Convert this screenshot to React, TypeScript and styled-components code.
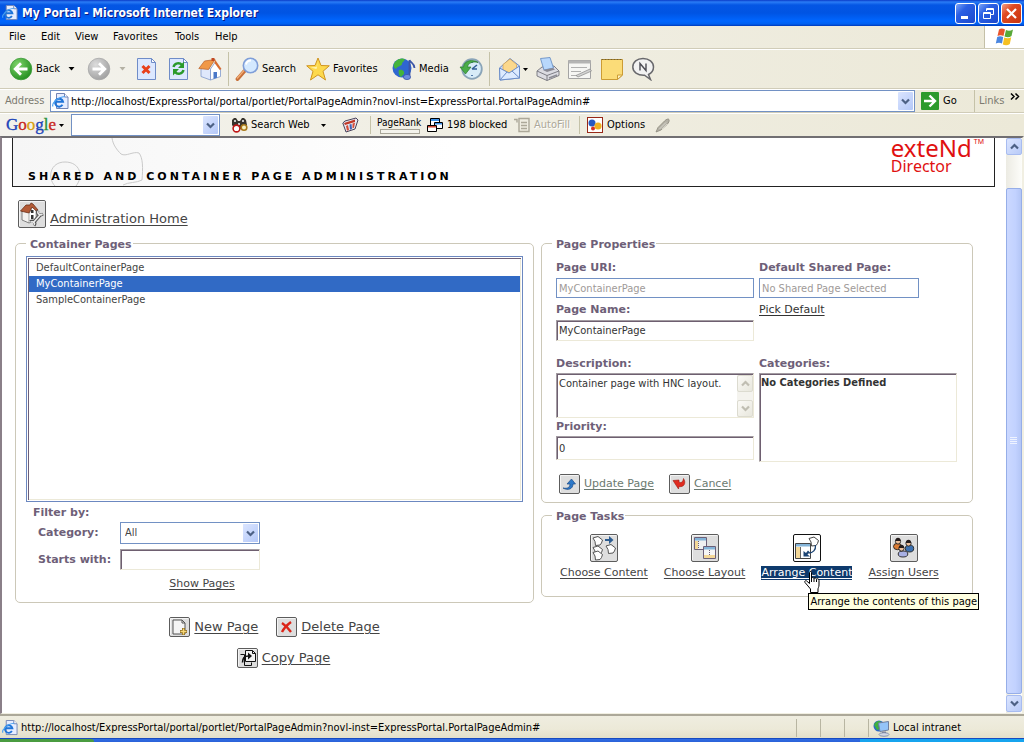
import React from "react";
import styled, { createGlobalStyle, css } from "styled-components";

const ui = `"DejaVu Sans Condensed", "Noto Sans", sans-serif`;
const page = `"DejaVu Sans", "Noto Sans", sans-serif`;

const Global = createGlobalStyle`
  * { box-sizing: border-box; }
  body { margin: 0; background: #fff; font: 11px/14px ${ui}; color: #000; }
  svg { display: block; flex: none; }
  button, input, select, textarea { font: inherit; color: inherit; margin: 0; border-radius: 0; }
`;

/* ---------- browser window ---------- */

const Window = styled.div`
  display: flex;
  flex-direction: column;
  min-height: 100vh;
  overflow: hidden;
`;

const bare = css`
  border: 0;
  padding: 0;
  background: none;
  display: flex;
  align-items: center;
  flex: none;
  white-space: nowrap;
`;

const TitleBar = styled.header`
  display: flex;
  align-items: center;
  gap: 4px;
  height: 26px;
  padding: 0 2px;
  background: linear-gradient(#0a3bc8 0, #2a7cf6 2px, #0456e4 5px, #0054e3 13px, #0066ff 21px, #0060f0 24px, #0038b8 26px);
`;

const Title = styled.h1`
  flex: 1;
  margin: 0;
  font: bold 12px/16px "DejaVu Sans Condensed", sans-serif;
  color: #fff;
  text-shadow: 1px 1px 0 #0a1883;
`;

const Caption = styled.button<{ $close?: boolean }>`
  ${bare}
  justify-content: center;
  width: 21px;
  height: 21px;
  margin-left: -2px;
  border: 1px solid #fff;
  border-radius: 3px;
  background: ${(p) =>
    p.$close
      ? "linear-gradient(135deg, #f0a088, #e04a22 35%, #c83410)"
      : "linear-gradient(135deg, #7ba4f8, #2a5fe4 35%, #1c48cc)"};
`;

const MenuBar = styled.nav`
  display: flex;
  height: 23px;
  align-items: stretch;
  background: linear-gradient(90deg, #f4f3ee, #ece9d8);
  border-bottom: 1px solid #d0ccb8;
`;

const Menu = styled.button<{ $w: number }>`
  ${bare}
  width: ${(p) => p.$w}px;
  height: 21px;
`;

const Menus = styled.div`
  display: flex;
  flex: 1;
  padding-left: 9px;
`;

const Flag = styled.div`
  display: flex;
  align-items: center;
  justify-content: center;
  width: 40px;
  background: #fff;
  border-left: 1px solid #c4c0a8;
`;

const bar = css`
  display: flex;
  align-items: center;
  background: linear-gradient(90deg, #f3f2ec, #ece9d8);
  border-top: 1px solid #fff;
`;

const ToolBar = styled.div`
  ${bar}
  height: 40px;
  padding-left: 9px;
  border-bottom: 1px solid #d0ccb8;
`;

const Tool = styled.button<{ $w: number }>`
  ${bare}
  gap: 3px;
  width: ${(p) => p.$w}px;
  height: 32px;
`;

const Separator = styled.span<{ $w: number; $h?: number }>`
  flex: none;
  width: ${(p) => p.$w}px;
  height: ${(p) => p.$h ?? 34}px;
  border-left: 1px solid #c5c2a8;
`;

const AddressBar = styled.form`
  ${bar}
  height: 24px;
  padding-left: 5px;
  border-bottom: 1px solid #d0ccb8;
`;

const AddressLabel = styled.label`
  width: 45px;
  color: #7c7a70;
`;

const Combo = styled.div<{ $w?: number }>`
  display: flex;
  align-items: center;
  flex: ${(p) => (p.$w ? `0 0 ${p.$w}px` : "1")};
  min-width: 0;
  height: 22px;
  padding: 1px;
  gap: 2px;
  border: 1px solid #7291c4;
  background: #fff;
`;

const ComboInput = styled.input`
  flex: 1;
  min-width: 0;
  height: 18px;
  border: 0;
  padding: 0;
  outline: 0;
  background: none;
`;

const DropButton = styled.button`
  ${bare}
  justify-content: center;
  width: 15px;
  height: 18px;
  background: linear-gradient(135deg, #dbe5ff, #b4c8f8);
  border-radius: 1px;
`;

const GoButton = styled.button`
  ${bare}
  gap: 4px;
  width: 53px;
  margin-left: 6px;
`;

const Links = styled.div`
  display: flex;
  justify-content: space-between;
  width: 50px;
  height: 22px;
  padding: 4px 4px 0 4px;
  border-left: 1px solid #c5c2a8;
  color: #7c7a70;
`;

const Chevron = styled.svg`
  margin-top: -1px;
`;

const GoogleBar = styled.div`
  ${bar}
  height: 23px;
  padding-left: 6px;
`;

const GoogleLogo = styled.button`
  ${bare}
  width: 65px;
  gap: 3px;
  font: 17px/20px "Liberation Serif", serif;
`;

const Letter = styled.span<{ $c: string }>`
  color: ${(p) => p.$c};
  -webkit-text-stroke: thin ${(p) => p.$c};
`;

const Rank = styled.div`
  width: 50px;
  font-size: 10px;
  line-height: 11px;
  flex: none;
`;

const RankMeter = styled.div`
  width: 40px;
  height: 5px;
  margin: 1px 0 0 3px;
  border: 1px solid #a8a598;
  background: #f4f3ec;
`;

const Muted = styled.span`
  color: #aca899;
  text-shadow: 1px 1px 0 #fff;
`;

const Viewport = styled.div`
  display: flex;
  flex: 1;
  border-top: 2px solid #716f72;
  border-left: 2px solid #8a7f88;
  border-bottom: 1px solid #f1efe2;
  border-right: 2px solid #f1efe2;
`;

const ScrollTrack = styled.div`
  display: flex;
  flex-direction: column;
  width: 16px;
  padding-bottom: 1px;
  background: linear-gradient(90deg, #ecebe3, #fdfdfa);
`;

const ScrollButton = styled.button<{ $off?: boolean }>`
  ${bare}
  justify-content: center;
  width: 16px;
  height: 17px;
  border: 1px solid ${(p) => (p.$off ? "#dcdbd0" : "#a8bcf0")};
  border-radius: 2px;
  background: ${(p) => (p.$off ? "linear-gradient(135deg,#fbfaf6,#e8e7dd)" : "linear-gradient(135deg,#dbe5ff,#b9cbf8)")};
`;

const Thumb = styled.div`
  flex: 1;
  display: flex;
  align-items: center;
  justify-content: center;
  margin: 33px 0 1px;
  border: 1px solid #96aee8;
  border-radius: 2px;
  background: linear-gradient(90deg, #cbd8ff, #c2d2ff 60%, #b4c6f6);
`;

const StatusBar = styled.footer`
  display: flex;
  align-items: center;
  height: 24px;
  padding: 2px 0 0 2px;
  gap: 3px;
  border-top: 2px solid #aca899;
  background: linear-gradient(#efede0, #ece9d8 60%, #e2dfca);
`;

const StatusText = styled.span`
  flex: 1;
`;

const Panes = styled.div`
  display: flex;
`;

const Pane = styled.span<{ $w: number }>`
  display: flex;
  align-items: center;
  gap: 3px;
  width: ${(p) => p.$w}px;
  height: 18px;
  padding-left: 4px;
  border-left: 1px solid #b8b5a2;
`;

const TaskBar = styled.div`
  display: flex;
  height: 4px;
  background: linear-gradient(#2f6be4, #2a62d8);
  border-top: 1px solid #164ac0;
`;

const StartEdge = styled.div`
  width: 94px;
  background: #4a9c40;
  border-radius: 0 4px 0 0;
`;

const TrayEdge = styled.div`
  width: 164px;
  margin-left: auto;
  background: #16a4ee;
`;

/* ---------- portal page ---------- */

const Main = styled.main`
  flex: 1;
  min-width: 0;
  color: #444;
  font-family: ${page};
`;

const Banner = styled.div`
  position: relative;
  display: flex;
  justify-content: space-between;
  height: 49px;
  margin: 0 11px 0 10px;
  padding: 0 10px 0 15px;
  border: 1px solid #222;
  border-top: 0;
  background: linear-gradient(90deg, #f6f6f6, #fff 45%);
`;

const Puzzle = styled.svg`
  position: absolute;
  left: 0;
  top: 0;
`;

const BannerTitle = styled.h2`
  position: relative;
  align-self: flex-end;
  margin: 0 0 2px;
  color: #000;
  font: bold 11px/14px ${page};
  letter-spacing: 3px;
`;

const Brand = styled.div`
  display: grid;
  grid-template-columns: auto auto;
  column-gap: 2px;
  align-content: start;
  color: #e01010;
  font-family: "Noto Sans", sans-serif;
`;

const BrandName = styled.span`
  font-size: 24px;
  line-height: 20px;
`;

const BrandMark = styled.span`
  font-size: 7px;
  line-height: 8px;
`;

const BrandSub = styled.span`
  font-size: 16px;
  line-height: 16px;
`;

const Link = styled.a<{ $size?: number; $tone?: string }>`
  display: inline-flex;
  align-items: center;
  gap: 4px;
  color: ${(p) => p.$tone ?? "#444"};
  font-size: ${(p) => p.$size ?? 11}px;
  line-height: 14px;
  white-space: nowrap;
  text-decoration: underline;
  text-underline-offset: 2px;
  text-decoration-thickness: 1px;
`;

const HomeRow = styled.div`
  display: flex;
  padding: 13px 0 7px 16px;
`;

const HomeText = styled.span`
  padding-top: 9px;
`;

const Columns = styled.div`
  display: grid;
  grid-template-columns: minmax(0, 519fr) minmax(0, 432fr);
  gap: 7px;
  padding: 0 33px 0 13px;
`;

const Stack = styled.div`
  display: flex;
  flex-direction: column;
  gap: 4px;
`;

const Group = styled.fieldset<{ $pad: string }>`
  min-width: 0;
  margin: 0;
  padding: ${(p) => p.$pad};
  border: 1px solid #ccc8b8;
  border-radius: 5px;
`;

const bold = css`
  color: #6e5f78;
  font-weight: bold;
  font-size: 11px;
`;

const Legend = styled.legend<{ $shift?: number }>`
  ${bold}
  margin-left: ${(p) => p.$shift ?? 0}px;
  padding: 4px 1px 0 4px;
  line-height: 12px;
`;

const Label = styled.label`
  ${bold}
  display: block;
  line-height: 14px;
`;

const PageList = styled.select`
  display: block;
  width: 100%;
  height: 246px;
  padding: 3px 2px 2px 2px;
  overflow: hidden;
  outline: 0;
  border: 1px solid #6c88c0;
  box-shadow: inset 0 0 0 1px #fff, inset 2px 2px 0 #6e5f78, inset -2px -2px 0 #ece9d8;
  background: #fff;
  font-family: ${ui};
`;

const PageOption = styled.option`
  min-height: 16px;
  padding: 1px 7px;
  color: #444;
  line-height: 14px;
  &:checked {
    color: #fff;
    background: #316ac5 linear-gradient(#316ac5, #316ac5);
  }
`;

const Filters = styled.div`
  display: grid;
  grid-template-columns: 82px 140px;
  row-gap: 5px;
  align-items: center;
  padding-left: 12px;
`;

const FilterTitle = styled.div`
  ${bold}
  padding: 4px 0 2px 7px;
  line-height: 14px;
`;

const SelectBox = styled.div`
  display: grid;
  align-items: center;
  height: 22px;
  border: 1px solid #7291c4;
  background: #fff;
`;

const Select = styled.select`
  grid-area: 1 / 1;
  appearance: none;
  width: 100%;
  padding: 0 18px 0 4px;
  border: 0;
  outline: 0;
  background: none;
  font-family: ${ui};
  font-size: 11px;
`;

const SelectArrow = styled.span`
  grid-area: 1 / 1;
  justify-self: end;
  display: flex;
  align-items: center;
  justify-content: center;
  width: 15px;
  height: 18px;
  margin-right: 1px;
  background: linear-gradient(135deg, #dbe5ff, #b4c8f8);
  pointer-events: none;
`;

const sunken = css`
  border: 1px solid;
  border-color: #a39ca2 #ece9d8 #ece9d8 #a39ca2;
  box-shadow: inset 1px 1px 0 #6e5f70;
  background: #fff;
`;

const TextInput = styled.input<{ $h?: number }>`
  ${sunken}
  display: block;
  width: 100%;
  height: ${(p) => p.$h ?? 21}px;
  padding: 0 2px;
  color: #333;
  font-family: ${ui};
  &:disabled {
    border: 1px solid #7291c4;
    box-shadow: none;
    color: #a09a98;
  }
`;

const LinkRow = styled.div<{ $gap: number; $pad?: string; $start?: boolean }>`
  display: flex;
  justify-content: ${(p) => (p.$start ? "flex-start" : "center")};
  gap: ${(p) => p.$gap}px;
  padding: ${(p) => p.$pad ?? 0};
`;

const Fields = styled.div`
  display: grid;
  grid-template-columns: minmax(0, 1fr) minmax(0, 1fr);
  column-gap: 5px;
`;

const Field = styled.div<{ $narrow?: boolean; $end?: number; $gap?: number }>`
  display: flex;
  flex-direction: column;
  align-items: flex-start;
  gap: ${(p) => p.$gap ?? 3}px;
  padding-right: ${(p) => (p.$narrow ? 38 : 0)}px;
  padding-bottom: ${(p) => p.$end ?? 0}px;
`;

const AreaBox = styled.div`
  ${sunken}
  display: flex;
  width: 100%;
  height: 45px;
  padding: 1px 0 0 1px;
`;

const Area = styled.textarea`
  flex: 1;
  min-width: 0;
  padding: 2px 1px;
  border: 0;
  outline: 0;
  resize: none;
  overflow: hidden;
  background: none;
  color: #333;
  font-family: ${ui};
`;

const AreaScroll = styled.div`
  display: flex;
  flex-direction: column;
  justify-content: space-between;
  background: #f4f3ee;
`;

const CategoryBox = styled.div`
  ${sunken}
  width: 100%;
  height: 89px;
  padding: 1px;
  color: #333;
  font: bold 11px/16px ${ui};
`;

const Tasks = styled.div`
  display: flex;
  gap: 16px;
`;

const Task = styled.a<{ $active?: boolean }>`
  position: relative;
  display: flex;
  flex-direction: column;
  align-items: center;
  gap: 4px;
  color: ${(p) => (p.$active ? "#fff" : "#444")};
  line-height: 14px;
  white-space: nowrap;
  text-decoration: none;
`;

const TaskText = styled.span<{ $active?: boolean }>`
  background: ${(p) => (p.$active ? "#0e3a6c" : "none")};
  text-decoration: underline;
  text-underline-offset: 2px;
  text-decoration-thickness: 1px;
`;

const Tooltip = styled.span`
  position: absolute;
  left: 47px;
  top: 59px;
  z-index: 2;
  height: 17px;
  padding: 0 1px;
  border: 1px solid #000;
  background: #ffffe1;
  color: #000;
  font: 11px/15px ${ui};
`;

const Hand = styled.svg`
  position: absolute;
  left: 43px;
  top: 37px;
  z-index: 3;
`;

/* ---------- drawings ---------- */

const Arrow = ({ c = "#000" }: { c?: string }) => (
  <svg width="7" height="4" viewBox="0 0 7 4"><path d="M.5 0h6L3.500 3.500z" fill={c} /></svg>
);

const TinyArrow = () => (
  <svg width="5" height="3" viewBox="0 0 5 3"><path d="M0 0h5L2.500 3z" /></svg>
);

const Vee = ({ up, c = "#4d6185" }: { up?: boolean; c?: string }) => (
  <svg width="9" height="7" viewBox="0 0 9 7">
    <path d={up ? "M1 5.500 4.500 2 8 5.500" : "M1 1.500 4.500 5 8 1.500"} fill="none" stroke={c} strokeWidth="2.200" />
  </svg>
);

const IePage = ({ s = 17 }: { s?: number }) => (
  <svg width={s} height={s} viewBox="0 0 17 17">
    <path d="M4.500.5h8l3.500 3.500v11.500H4.500z" fill="#e6edff" stroke="#7284b4" />
    <path d="M12.500.5V4H16" fill="#fff" stroke="#7284b4" />
    <path d="M10.500 11.800A4 4 0 1 1 11 8.700H3.500" fill="none" stroke="#1f74d8" strokeWidth="2" />
    <path d="M1 13.500C-.5 11 5 4 13 3.500" fill="none" stroke="#4aa0f0" strokeWidth="1.200" />
  </svg>
);

const WindowsFlag = () => (
  <svg width="20" height="19" viewBox="0 0 20 19">
    <path d="M4 1.500C6 0 8 .5 10 1.500L8.500 8C6.500 7 4.500 7 2.500 8z" fill="#e8542c" />
    <path d="M11 2c2 1 4.500 1 7-.5L16.500 8c-2 1.500-4.500 1.500-7 .5z" fill="#58a838" />
    <path d="M2.200 9C4 8 6 8 8.200 9L7 15.500c-2-1-4-1-6.200 0z" fill="#4a86e0" />
    <path d="M9.200 9.500c2.500 1 4.800 1 7-.2L14.800 16c-2 1.500-4.500 1.500-7 .5z" fill="#f6c022" />
  </svg>
);

const RoundArrow = ({ back }: { back?: boolean }) => (
  <svg width="24" height="24" viewBox="0 0 24 24">
    <defs>
      <radialGradient id={back ? "gb" : "gf"} cx=".35" cy=".3" r=".8">
        <stop offset="0" stopColor={back ? "#7fd46a" : "#dcdcdc"} />
        <stop offset="1" stopColor={back ? "#1d8a1c" : "#9c9c9c"} />
      </radialGradient>
    </defs>
    <circle cx="12" cy="12" r="10.800" fill={`url(#${back ? "gb" : "gf"})`} stroke={back ? "#3c9a38" : "#a8a8a8"} strokeWidth=".8" />
    <path d={back ? "M18.500 12H7M12 6.200 6.200 12l5.800 5.800" : "M5.500 12H17M12 6.200l5.800 5.800-5.800 5.800"} fill="none" stroke="#fff" strokeWidth="2.800" />
  </svg>
);

const Sheet = ({ children }: { children: React.ReactNode }) => (
  <svg width="24" height="24" viewBox="0 0 24 24">
    <path d="M2.500 1.500h14l4 4v17h-18z" fill="#dce8ff" stroke="#6f8cc8" />
    <path d="M16.500 1.500v4h4z" fill="#fff" stroke="#6f8cc8" />
    {children}
  </svg>
);

const HomeIcon = () => (
  <svg width="24" height="24" viewBox="0 0 24 24">
    <path d="M3 12v7.500L12.500 23V12.500L8 7z" fill="#dfe8fc" stroke="#7f98cc" strokeWidth=".8" />
    <path d="M12.500 23V12L17 5.500l5.500 6.500v7.500z" fill="#fff" stroke="#7f98cc" strokeWidth=".8" />
    <path d="M.8 11.500 6.500 4 17 2.500l-6.500 10z" fill="#f09848" stroke="#b8602a" strokeWidth=".7" />
    <path d="M17 2.500 23.500 12l-1.800 1L16.500 6z" fill="#d86c30" />
    <path d="M15.500 15h3.500v5.800l-3.500 1.200z" fill="#4a78c8" />
    <path d="M13.500 1h3v3h-3z" fill="#c24a22" />
  </svg>
);

const SearchIcon = () => (
  <svg width="24" height="24" viewBox="0 0 24 24">
    <path d="M2.500 22 9.500 14" stroke="#c8703a" strokeWidth="3.800" strokeLinecap="round" />
    <path d="M2 21.500 9 13.500" stroke="#f4b078" strokeWidth="1.200" />
    <circle cx="15.500" cy="8.500" r="7.200" fill="#d4e9ff" stroke="#7f9ed8" strokeWidth="1.600" />
    <path d="M11 7.500a5 5 0 0 1 5-4" fill="none" stroke="#fff" strokeWidth="2" />
  </svg>
);

const StarIcon = () => (
  <svg width="24" height="24" viewBox="0 0 24 24">
    <path d="M12 1l3 7.500 8.300.3-6.300 5.500L19.500 23 12 17.800 4.500 23 7 14.300.7 8.800 9 8.500z" fill="#fdd94c" stroke="#cf9420" />
    <path d="M12 4l-1.500 6-6 .5 6 1.500z" fill="#fff6b8" />
  </svg>
);

const MediaIcon = () => (
  <svg width="24" height="24" viewBox="0 0 24 24">
    <circle cx="10" cy="11" r="9.500" fill="#2f66d0" />
    <path d="M3 5c3-4 8-4 10-3-1 3-3 3-3 5S5 9 4 12C1 10 1 8 3 5zM7 13c3-1 6 1 5 4l-3 3c-2-1-3-5-2-7z" fill="#44b43c" />
    <path d="M17.500 3v15.500M17.500 3c1 3 5 3 5 8" fill="none" stroke="#3c56a8" strokeWidth="1.800" />
    <ellipse cx="15" cy="20" rx="3.600" ry="2.600" fill="#6c8ce0" stroke="#3c56a8" strokeWidth=".8" />
  </svg>
);

const HistoryIcon = () => (
  <svg width="24" height="24" viewBox="0 0 24 24">
    <circle cx="13" cy="12" r="9.800" fill="#d8ecf8" stroke="#8aa4b8" strokeWidth="1.800" />
    <path d="M13 12l5-4M13 12h5M13 5v1M13 18v1" stroke="#346098" strokeWidth="1.600" />
    <path d="M19 5.500C14 2 5 3 4.500 10H1l5.500 7L12 10H8.500C9 6 14 4 19 5.500z" fill="#4aac48" stroke="#2a7a2c" strokeWidth=".7" />
  </svg>
);

const MailIcon = () => (
  <svg width="24" height="24" viewBox="0 0 24 24">
    <path d="M1.500 11 12 1.500 21.500 9v12L2 23z" fill="#c8dcfc" stroke="#6a8cc8" />
    <path d="M5 7.500 12 2l6.500 5.500v5L12 16l-7-3z" fill="#fbd88c" stroke="#d8a048" strokeWidth=".7" />
    <path d="M1.500 11 11 16l10.500-7v12L2 23z" fill="#dceaff" stroke="#6a8cc8" />
    <path d="M2 23l7-8M21.500 21 14 14" stroke="#6a8cc8" />
  </svg>
);

const PrintIcon = () => (
  <svg width="24" height="24" viewBox="0 0 24 24">
    <path d="M1 14 6 10l12-1 5 5v4.500L11 23.500 1 19z" fill="#dcdce2" stroke="#74747c" strokeWidth=".9" />
    <path d="M4.500 1.500 14 .5l3.500 10.500L8 13z" fill="#b8d8fc" stroke="#6088c0" strokeWidth=".8" />
    <path d="M1 14l10 4.500L23 14M11 18.500v5" fill="none" stroke="#74747c" strokeWidth=".9" />
    <path d="M13 21 21 18" stroke="#8c8c94" strokeWidth="1.600" />
    <path d="M7 13l10-2 2 1.500-8 2.500z" fill="#8a8a94" />
  </svg>
);

const EditIcon = () => (
  <svg width="24" height="24" viewBox="0 0 24 24">
    <path d="M.5 3.500h22v18H.5z" fill="#f6f6f4" stroke="#a4a4a4" />
    <path d="M.5 3.500h22v3H.5z" fill="#b4b4b4" />
    <path d="M3 10.500h16M3 14.500h10M3 18.500h6" stroke="#b0b0b0" />
    <path d="M8 18.500 22 12l1.500 2L10 20z" fill="#d4d4d4" stroke="#888" strokeWidth=".7" />
  </svg>
);

const NoteIcon = () => (
  <svg width="24" height="24" viewBox="0 0 24 24">
    <path d="M1.500 2.500h21V18l-5 4.500h-16z" fill="#fbdc78" stroke="#cc9c34" />
    <path d="M1.500 2.500h21" stroke="#7a6428" strokeDasharray="2 1" />
    <path d="M22.500 18h-5v4.500z" fill="#fff2bc" stroke="#cc9c34" />
  </svg>
);

const BubbleIcon = () => (
  <svg width="24" height="24" viewBox="0 0 24 24">
    <path d="M11 1.500c6 0 10.500 3.500 10.500 8.500 0 3.500-2 6-5 7.500l2 5-6-4.300C5.500 18.500.8 15 .8 10S5 1.500 11 1.500z" fill="#f2f2f2" stroke="#68686c" strokeWidth="1.500" />
    <path d="M8 13.500v-7l6 7v-7" fill="none" stroke="#4c4c54" strokeWidth="1.400" />
  </svg>
);

const GoIcon = () => (
  <svg width="18" height="18" viewBox="0 0 18 18">
    <rect width="18" height="18" rx="1" fill="#2c9a2c" />
    <path d="M3 9h10M8.500 3.500 14 9l-5.500 5.500" fill="none" stroke="#fff" strokeWidth="2.400" />
  </svg>
);

const Binoculars = () => (
  <svg width="17" height="16" viewBox="0 0 17 16">
    <path d="M1 3 3 1h2l2 3h2l2-3h2l2 2 1 5-3 4H4L1 8z" fill="#38342e" />
    <path d="M3 3h2v2H3zM11 3h2v2h-2zM7 6h2v2H7z" fill="#c8c8c8" />
    <circle cx="5.500" cy="11.500" r="3.400" fill="#fff" stroke="#c01818" strokeWidth="1.600" />
    <circle cx="13" cy="10.500" r="2.800" fill="#f8f0c0" stroke="#a87818" strokeWidth="1.600" />
  </svg>
);

const NewsIcon = () => (
  <svg width="17" height="16" viewBox="0 0 17 16">
    <path d="M.8 6 3 4l11-3 2 2-3 9-9 3z" fill="#e8e8f0" stroke="#48425a" />
    <path d="M2 6l11-3.500V5L3 8z" fill="#c03828" />
    <path d="M4 9l2-1 1 5-2 .7z" fill="#d84c38" /><path d="M7.500 7.500l2-.5.5 5-2 .7z" fill="#4460b0" /><path d="M10.500 6.500l2.500-.7-1 5-1.500.5z" fill="#d84c38" />
  </svg>
);

const PopupIcon = () => (
  <svg width="17" height="16" viewBox="0 0 17 16">
    <path d="M3.500 1.500h9v7h-9z" fill="#fff" stroke="#000" /><path d="M4 2h8v2H4z" fill="#3c90e8" />
    <path d="M7.500 5.500h8v6h-8z" fill="#fff" stroke="#000" /><path d="M8 6h7v1.500H8z" fill="#3c90e8" />
    <path d="M.5 8.500h9v6h-9z" fill="#fff" stroke="#000" /><path d="M1 9h8v1.500H1z" fill="#d04430" />
  </svg>
);

const FillIcon = () => (
  <svg width="17" height="16" viewBox="0 0 17 16">
    <path d="M5 1.500h10v13H5zM7 5.500h6M7 8.500h6M7 11.500h6M0 2.500h3v3" fill="none" stroke="#aca899" strokeWidth="1.400" />
  </svg>
);

const OptionsIcon = () => (
  <svg width="17" height="16" viewBox="0 0 17 16">
    <rect x=".5" y=".5" width="15" height="15" fill="#fff" stroke="#982818" />
    <circle cx="5" cy="6" r="3.500" fill="#2858c0" /><circle cx="11" cy="9" r="3.600" fill="#f0b020" />
    <circle cx="6" cy="11.500" r="2" fill="#d83020" />
  </svg>
);

const PencilIcon = () => (
  <svg width="15" height="15" viewBox="0 0 15 15">
    <path d="M1 14 3 9.500 9.500 3c2-2 4-2.500 4.500-1.500s0 3-2 5L6 12z" fill="#b4b1a6" stroke="#8c897c" strokeWidth=".8" />
    <path d="M4.500 11 11 4.500M7 11l5-5" stroke="#e0ded4" strokeWidth=".8" />
  </svg>
);

const IntranetIcon = () => (
  <svg width="17" height="17" viewBox="0 0 17 17">
    <circle cx="6" cy="6" r="5.500" fill="#2c68c8" /><path d="M1 5c1-4 6-5 7-3L5 6l2 3-3 1z" fill="#40b040" />
    <path d="M5.500 3 15.500 1.500V10L7 11.500z" fill="#94c4f8" stroke="#7080a0" />
    <path d="M9 11.500h4v2H9z" fill="#889" /><ellipse cx="11" cy="14.500" rx="5" ry="1.800" fill="#d4d8e4" stroke="#7480a0" strokeWidth=".8" />
  </svg>
);

const Tile = ({ w = 21, h = 20, white, children }: { w?: number; h?: number; white?: boolean; children: React.ReactNode }) => (
  <svg width={w} height={h} viewBox={`0 0 ${w} ${h}`}>
    <rect x=".5" y=".5" width={w - 1} height={h - 1} rx="1.500" fill={white ? "#fff" : "#dedede"} stroke={white ? "#111" : "#5c5c5c"} />
    {!white && <path d={`M1.500 ${h - 2}V1.500h${w - 3}`} fill="none" stroke="#f4f4f4" />}
    {children}
  </svg>
);

/* a small tilted sheet with a rounded lower edge, drawn from its left corner */
const card = "l5-1.500 4.500 3.500-1 3-1.500 2-4.500.5-.5-4z";

const HandCursor = () => (
  <Hand width="17" height="23" viewBox="0 0 17 23">
    <path d="M5.500 1.500c0-1.300 2-1.300 2 0v6c0-1.300 2.500-1.300 2.500.3 0-1.300 2.500-1 2.500.7 0-1.200 2.500-1 2.500.8V14c0 2-1 3-1 4v3.500H6.500V18C5 16 3 14 1 11.500c-1-1.500 1-2.500 2-1.200l2.500 2.200z" fill="#fff" stroke="#000" />
    <path d="M7.500 7v4M10 8v3M12.500 9v2" stroke="#000" />
  </Hand>
);

/* ---------- data ---------- */

const url = "http://localhost/ExpressPortal/portal/portlet/PortalPageAdmin?novl-inst=ExpressPortal.PortalPageAdmin#";

const menus: [string, number][] = [["File", 32], ["Edit", 34], ["View", 38], ["Favorites", 62], ["Tools", 40], ["Help", 40]];

const logo: [string, string][] = [["G", "#1c44b8"], ["o", "#c8281c"], ["o", "#d8a010"], ["g", "#1c44b8"], ["l", "#289038"], ["e", "#c8281c"]];

const pages = ["DefaultContainerPage", "MyContainerPage", "SampleContainerPage"];

export default function App() {
  return (
    <>
      <Global />
      <Window>
        <TitleBar>
          <IePage s={16} />
          <Title>My Portal - Microsoft Internet Explorer</Title>
          <Caption aria-label="Minimize">
            <svg width="15" height="15"><path d="M3 10h7v3H3z" fill="#fff" /></svg>
          </Caption>
          <Caption aria-label="Restore">
            <svg width="15" height="15" fill="none" stroke="#fff"><path d="M5.500 5V2.500h7v6H10M5 3.500h7M2.500 6.500h7v6h-7zM3 7.500h6" /></svg>
          </Caption>
          <Caption $close aria-label="Close">
            <svg width="15" height="15"><path d="M3 3l9 9M12 3l-9 9" stroke="#fff" strokeWidth="2.200" /></svg>
          </Caption>
        </TitleBar>

        <MenuBar>
          <Menus>
            {menus.map(([name, w]) => <Menu key={name} $w={w}>{name}</Menu>)}
          </Menus>
          <Flag><WindowsFlag /></Flag>
        </MenuBar>

        <ToolBar>
          <Tool $w={59}><RoundArrow back />Back</Tool>
          <Tool $w={19} aria-label="Back history"><Arrow /></Tool>
          <Tool $w={32} aria-label="Forward"><RoundArrow /></Tool>
          <Tool $w={16} aria-label="Forward history"><Arrow c="#b4b1a4" /></Tool>
          <Tool $w={32} aria-label="Stop">
            <Sheet><path d="M7.500 9l7 7M14.500 9l-7 7" stroke="#e8401c" strokeWidth="3" /></Sheet>
          </Tool>
          <Tool $w={31} aria-label="Refresh">
            <Sheet>
              <path d="M6.500 10c1-4 6-5 8.500-2M16.500 13c-1 4-6 5-8.500 2" fill="none" stroke="#2a9a2c" strokeWidth="2.400" />
              <path d="M17 4.500V11h-6zM6 18.500V12h6z" fill="#2a9a2c" />
            </Sheet>
          </Tool>
          <Tool $w={30} aria-label="Home"><HomeIcon /></Tool>
          <Separator $w={7} />
          <Tool $w={71}><SearchIcon />Search</Tool>
          <Tool $w={86}><StarIcon />Favorites</Tool>
          <Tool $w={67}><MediaIcon />Media</Tool>
          <Tool $w={30} aria-label="History"><HistoryIcon /></Tool>
          <Separator $w={9} />
          <Tool $w={25} aria-label="Mail"><MailIcon /></Tool>
          <Tool $w={13} aria-label="Mail options"><TinyArrow /></Tool>
          <Tool $w={32} aria-label="Print"><PrintIcon /></Tool>
          <Tool $w={32} aria-label="Edit"><EditIcon /></Tool>
          <Tool $w={32} aria-label="Discuss"><NoteIcon /></Tool>
          <Tool $w={24} aria-label="Messenger"><BubbleIcon /></Tool>
        </ToolBar>

        <AddressBar onSubmit={(e) => e.preventDefault()}>
          <AddressLabel htmlFor="address">Address</AddressLabel>
          <Combo>
            <IePage />
            <ComboInput id="address" defaultValue={url} />
            <DropButton type="button" aria-label="Show addresses"><Vee /></DropButton>
          </Combo>
          <GoButton><GoIcon />Go</GoButton>
          <Links>
            Links
            <Chevron width="10" height="7" viewBox="0 0 10 7" fill="none" stroke="#000" strokeWidth="1.500">
              <path d="M1 .5l3 3-3 3M5.500.5l3 3-3 3" />
            </Chevron>
          </Links>
        </AddressBar>

        <GoogleBar>
          <GoogleLogo aria-label="Google">
            <span>{logo.map(([ch, c], i) => <Letter key={i} $c={c}>{ch}</Letter>)}</span>
            <TinyArrow />
          </GoogleLogo>
          <Combo $w={149}>
            <ComboInput aria-label="Search terms" />
            <DropButton aria-label="Search history"><Vee /></DropButton>
          </Combo>
          <Separator $w={11} $h={0} />
          <Tool $w={90}><Binoculars />Search Web</Tool>
          <Tool $w={21} aria-label="Search options"><TinyArrow /></Tool>
          <Tool $w={28} aria-label="News"><NewsIcon /></Tool>
          <Separator $w={7} $h={18} />
          <Rank>PageRank<RankMeter /></Rank>
          <Tool $w={87}><PopupIcon />198 blocked</Tool>
          <Tool $w={65}><FillIcon /><Muted>AutoFill</Muted></Tool>
          <Separator $w={8} $h={18} />
          <Tool $w={68}><OptionsIcon />Options</Tool>
          <Tool $w={16} aria-label="Highlight"><PencilIcon /></Tool>
        </GoogleBar>

        <Viewport>
          <Main>
            <Banner>
              <Puzzle width="140" height="48" viewBox="0 0 140 48" fill="none" stroke="#cacaca">
                <path d="M99 0c1 7 5 12 9 16 5 3 12-3 18-1 4 5 4 15 3 27-5 3-14 2-19 5M42 48c-8-8-5-24 10-24s19 14 11 24" />
              </Puzzle>
              <BannerTitle>SHARED AND CONTAINER PAGE ADMINISTRATION</BannerTitle>
              <Brand>
                <BrandName>exteNd</BrandName>
                <BrandMark>TM</BrandMark>
                <BrandSub>Director</BrandSub>
              </Brand>
            </Banner>

            <HomeRow>
              <Link href="#" $size={13}>
                <Tile w={28} h={28}>
                  <path d="M4 11v9l7 3 7-4v-9l-5-4z" fill="#f4f2f0" stroke="#666" strokeWidth=".8" />
                  <path d="M11 14v9l7-4V9l-3-3z" fill="#fff" stroke="#777" strokeWidth=".6" />
                  <path d="M2.500 11 8 5h4l1-2 2 1 5 6-1.500 1.200L14 7l-3 6z" fill="#b45c38" stroke="#6c3018" strokeWidth=".8" />
                  <path d="M13 10h2.500v3H13zM13 15h2.500v4H13z" fill="#333" />
                  <path d="M15 23l7-8" stroke="#555" strokeWidth="3.600" />
                  <path d="M20 10.500c-1.500 3 1 6 5 3.500M12 21.500c3-1.500 6.500 1 4 4" fill="none" stroke="#555" strokeWidth="3" />
                  <path d="M15 23l7-8M20 11c-1 2.500 1.500 5 4.500 3M12.500 22c3-1 5 1 3.500 3" fill="none" stroke="#ececec" strokeWidth="1.600" />
                </Tile>
                <HomeText>Administration Home</HomeText>
              </Link>
            </HomeRow>

            <Columns>
              <div>
                <Group $pad="5px 10px 11px">
                  <Legend>Container Pages</Legend>
                  <PageList size={14} defaultValue="MyContainerPage" aria-label="Container Pages">
                    {pages.map((p) => <PageOption key={p}>{p}</PageOption>)}
                  </PageList>
                  <FilterTitle>Filter by:</FilterTitle>
                  <Filters>
                    <Label htmlFor="category">Category:</Label>
                    <SelectBox>
                      <Select id="category"><option>All</option></Select>
                      <SelectArrow><Vee /></SelectArrow>
                    </SelectBox>
                    <Label htmlFor="starts">Starts with:</Label>
                    <TextInput id="starts" />
                  </Filters>
                  <LinkRow $gap={0} $pad="7px 145px 0 0">
                    <Link href="#">Show Pages</Link>
                  </LinkRow>
                </Group>
                <LinkRow $gap={18} $pad="14px 0 11px">
                  <Link href="#" $size={13}>
                    <Tile>
                      <path d="M4 3h9l3 3v11H4z" fill="#f4f4f4" stroke="#555" /><path d="M13 3v3h3" fill="none" stroke="#555" />
                      <path d="M14.500 11v7M11 14.500h7" stroke="#8a6a20" strokeWidth="3" /><path d="M14.500 11.500v6M11.500 14.500h6" stroke="#f8d878" strokeWidth="1.500" />
                    </Tile>
                    New Page
                  </Link>
                  <Link href="#" $size={13}>
                    <Tile><path d="M6 6c3 2 6 5 9 9M15 5c-4 3-7 6-9 10" fill="none" stroke="#dc2418" strokeWidth="2.400" /></Tile>
                    Delete Page
                  </Link>
                </LinkRow>
                <LinkRow $gap={0} $pad="0 0 12px 18px">
                  <Link href="#" $size={13}>
                    <Tile>
                      <path d="M3.500 6.500h4v11h7v-3" fill="none" stroke="#111" />
                      <path d="M8.500 2.500h7l3 3v8h-10z" fill="#f2f2f2" stroke="#111" />
                      <path d="M15.500 2.500v3h3" fill="none" stroke="#111" />
                      <path d="M5.500 14.500c0-4 1.500-6.500 6-6.500" fill="none" stroke="#111" strokeWidth="1.600" />
                      <path d="M11 4.500 15 8l-4 3.500z" fill="#111" />
                    </Tile>
                    Copy Page
                  </Link>
                </LinkRow>
              </div>

              <Stack>
                <Group $pad="10px 15px 8px 14px">
                  <Legend $shift={-4}>Page Properties</Legend>
                  <Fields>
                    <Field $end={5}>
                      <Label htmlFor="uri">Page URI:</Label>
                      <TextInput id="uri" $h={20} disabled defaultValue="MyContainerPage" />
                    </Field>
                    <Field $narrow>
                      <Label htmlFor="shared">Default Shared Page:</Label>
                      <TextInput id="shared" $h={20} disabled defaultValue="No Shared Page Selected" />
                    </Field>
                    <Field $end={16}>
                      <Label htmlFor="name">Page Name:</Label>
                      <TextInput id="name" defaultValue="MyContainerPage" />
                    </Field>
                    <Field><Link href="#" $tone="#333">Pick Default</Link></Field>
                    <Field $gap={2}>
                      <Label htmlFor="desc">Description:</Label>
                      <AreaBox>
                        <Area id="desc" defaultValue="Container page with HNC layout." />
                        <AreaScroll>
                          <ScrollButton $off aria-label="Scroll up"><Vee up c="#c0beb2" /></ScrollButton>
                          <ScrollButton $off aria-label="Scroll down"><Vee c="#c0beb2" /></ScrollButton>
                        </AreaScroll>
                      </AreaBox>
                      <Label htmlFor="priority">Priority:</Label>
                      <TextInput id="priority" $h={24} defaultValue="0" />
                    </Field>
                    <Field $gap={2}>
                      <Label as="div">Categories:</Label>
                      <CategoryBox>No Categories Defined</CategoryBox>
                    </Field>
                  </Fields>
                  <LinkRow $start $gap={15} $pad="12px 0 0 3px">
                    <Link href="#" $tone="#6c7a70">
                      <Tile><path d="M4 14c5 1 7-1 7-4H8l4.500-5 4 5H14c0 5-5 7-10 4z" fill="#2c78c8" stroke="#1c4c88" strokeWidth=".7" /></Tile>
                      Update Page
                    </Link>
                    <Link href="#" $tone="#6c7a70">
                      <Tile><path d="M4 6.500 10 6v2c2 1.500 4 0 4.500-3.500C17.500 9 15 13.500 10 12.500L9.500 15z" fill="#e02c20" stroke="#981810" strokeWidth=".6" /></Tile>
                      Cancel
                    </Link>
                  </LinkRow>
                </Group>

                <Group $pad="11px 0 16px 18px">
                  <Legend $shift={-8}>Page Tasks</Legend>
                  <Tasks>
                    <Task href="#">
                      <Tile w={28} h={28}>
                        <g fill="#fff" stroke="#555">
                          <path d={"M3 4" + card} /><path d={"M3 13.500" + card} /><path d={"M3 18.500" + card} /><path d={"M16 12" + card} />
                        </g>
                        <path d="M15 5h4V2l4.500 4-4.500 4V7h-4z" fill="#2c5c90" />
                      </Tile>
                      <TaskText>Choose Content</TaskText>
                    </Task>
                    <Task href="#">
                      <Tile w={28} h={28}>
                        <path d="M3.500 3.500h12v12h-12z" fill="#f0f0f0" stroke="#6c6078" /><path d="M4 4h11v2.500H4z" fill="#84b4d8" /><path d="M4 7h3v8H4z" fill="#f4d898" />
                        <path d="M12.500 12.500h12v12h-12z" fill="#f6f6f6" stroke="#6c6078" /><path d="M13 13h11v2.500H13z" fill="#84b4d8" /><path d="M13 21h11v3H13z" fill="#f4d898" />
                        <path d="M18.500 16v5M7.500 7v8" stroke="#6c6078" strokeDasharray="1 1" />
                      </Tile>
                      <TaskText>Choose Layout</TaskText>
                    </Task>
                    <Task href="#" $active>
                      <Tile w={28} h={28} white>
                        <path d="M2.500 9.500h15v15h-15z" fill="#fff" stroke="#444" /><path d="M3 10h14v2.500H3z" fill="#84b4d8" /><path d="M3 13h4v11H3z" fill="#f4d898" />
                        <path d="M7.500 13v11" stroke="#666" /><path d={"M16 4.500" + card} fill="#fff" stroke="#444" />
                        <path d="M22.500 11c.5 5-2.500 8-7 8" fill="none" stroke="#1c4474" strokeWidth="1.300" /><path d="M10.500 17v5.500H17l-2.500-2 2-2.500-1.500-1.500-2 2.500z" fill="#1c4474" />
                      </Tile>
                      <TaskText $active>Arrange Content</TaskText>
                      <HandCursor />
                      <Tooltip role="tooltip">Arrange the contents of this page</Tooltip>
                    </Task>
                    <Task href="#">
                      <Tile w={28} h={28}>
                        <g stroke="#222" strokeWidth=".9">
                          <ellipse cx="7.500" cy="12.500" rx="4" ry="3.200" fill="#dc7c34" /><circle cx="8" cy="7.500" r="2.600" fill="#ecc09c" />
                          <ellipse cx="19.500" cy="14.500" rx="4.200" ry="3.500" fill="#3c70b0" /><circle cx="18.500" cy="9.500" r="2.600" fill="#ecc09c" />
                          <ellipse cx="13" cy="20" rx="4.800" ry="3" fill="#a8b0e4" /><circle cx="11.500" cy="14.500" r="2.600" fill="#ecc09c" />
                        </g>
                        <path d="M5.200 7c0-4.500 5.600-4.500 5.600 0zM15.700 9c0-4.500 5.600-4.500 5.600 0zM8.700 14c0-4.500 5.600-4.500 5.600 0z" fill="#241c1c" />
                      </Tile>
                      <TaskText>Assign Users</TaskText>
                    </Task>
                  </Tasks>
                </Group>
              </Stack>
            </Columns>
          </Main>

          <ScrollTrack>
            <ScrollButton aria-label="Scroll page up"><Vee up /></ScrollButton>
            <Thumb><svg width="8" height="8"><path d="M0 .5h7M0 2.500h7M0 4.500h7M0 6.500h7" stroke="#eef3ff" /></svg></Thumb>
            <ScrollButton aria-label="Scroll page down"><Vee /></ScrollButton>
          </ScrollTrack>
        </Viewport>

        <StatusBar>
          <IePage s={16} />
          <StatusText>{url}</StatusText>
          <Panes>
            <Pane $w={24} /><Pane $w={24} /><Pane $w={24} />
            <Pane $w={156}><IntranetIcon />Local intranet</Pane>
          </Panes>
        </StatusBar>
        <TaskBar><StartEdge /><TrayEdge /></TaskBar>
      </Window>
    </>
  );
}
